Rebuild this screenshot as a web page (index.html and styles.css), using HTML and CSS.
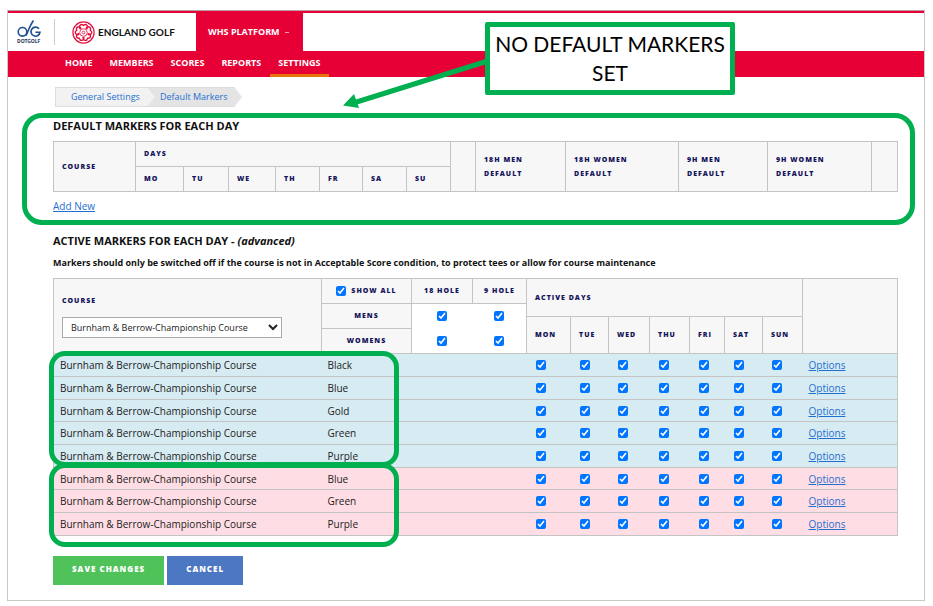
FILE: index.html
```html
<!DOCTYPE html>
<html lang="en">
<head>
<meta charset="utf-8">
<title>Default Markers</title>
<link rel="stylesheet" href="styles.css">
</head>
<body>
<div class="page">
  <header class="header">
    <a class="dotgolf" href="#" aria-label="DotGolf">
      <svg width="28" height="26" viewBox="0 0 28 26">
        <circle cx="6.500" cy="12.800" r="4.300" fill="none" stroke="#1d4f91" stroke-width="1.600"/>
        <path d="M10 16.500C12 13 14 6 17.500 1.500" stroke="#1d4f91" stroke-width="1.600" fill="none"/>
        <path d="M23 9.800A4.500 4.500 0 1 0 24 13.200H19.500" fill="none" stroke="#1d4f91" stroke-width="1.600"/>
        <text x="1" y="23.500" class="dotgolf-name">DOTGOLF</text>
      </svg>
    </a>
    <a class="brand" href="#">
      <svg width="23" height="23" viewBox="0 0 23 23" fill="none" stroke="#e4123f">
        <circle cx="11.500" cy="11.500" r="10.600" stroke-width="1.200"/>
        <path id="petal" stroke-width="1.300" d="M8.600 8.200C5.800 5.200 8.800 2.200 11.500 4.400 14.200 2.200 17.200 5.200 14.400 8.200"/>
        <use href="#petal" transform="rotate(72 11.500 11.500)"/>
        <use href="#petal" transform="rotate(144 11.500 11.500)"/>
        <use href="#petal" transform="rotate(216 11.500 11.500)"/>
        <use href="#petal" transform="rotate(288 11.500 11.500)"/>
        <circle cx="11.500" cy="11.500" r="3.800" stroke-width=".8"/>
        <circle cx="11.500" cy="11.500" r="1.400" stroke-width=".8"/>
      </svg>
      <span>ENGLAND GOLF</span>
    </a>
    <button class="platform" type="button">WHS PLATFORM <span class="caret"></span></button>
  </header>
  <nav class="nav">
    <a href="#">HOME</a>
    <a href="#">MEMBERS</a>
    <a href="#">SCORES</a>
    <a href="#">REPORTS</a>
    <a href="#" class="current">SETTINGS</a>
  </nav>

  <main class="content">
    <div class="crumbs">
      <a href="#" class="crumb">General Settings</a>
      <a href="#" class="crumb crumb-last">Default Markers</a>
    </div>

    <section class="defaults">
      <h2>DEFAULT MARKERS FOR EACH DAY</h2>
      <table class="grid default-grid">
        <colgroup>
          <col class="w82"><col class="w48"><col class="w45"><col class="w47"><col class="w44"><col class="w43"><col class="w44"><col class="w44"><col class="w25"><col class="w90"><col class="w113"><col class="w89"><col class="w104"><col class="w26">
        </colgroup>
        <thead>
          <tr>
            <th rowspan="2">COURSE</th><th colspan="7">DAYS</th><th rowspan="2"></th>
            <th rowspan="2">18H MEN<br>DEFAULT</th><th rowspan="2">18H WOMEN<br>DEFAULT</th>
            <th rowspan="2">9H MEN<br>DEFAULT</th><th rowspan="2">9H WOMEN<br>DEFAULT</th><th rowspan="2"></th>
          </tr>
          <tr><th>MO</th><th>TU</th><th>WE</th><th>TH</th><th>FR</th><th>SA</th><th>SU</th></tr>
        </thead>
      </table>
      <a href="#" class="link add">Add New</a>
      <span class="ring ring-defaults"></span>
    </section>

    <section class="active">
      <h2>ACTIVE MARKERS FOR EACH DAY - <em>(advanced)</em></h2>
      <p class="note">Markers should only be switched off if the course is not in Acceptable Score condition, to protect tees or allow for course maintenance</p>
      <div class="table-wrap">
        <table class="grid active-grid">
          <colgroup>
            <col class="w268"><col class="w90"><col class="w61"><col class="w54"><col class="w44"><col class="w38"><col class="w41"><col class="w40"><col class="w35"><col class="w38"><col class="w40"><col class="w95">
          </colgroup>
          <thead>
            <tr class="h25">
              <th rowspan="4" class="course-head">
                <label for="course">COURSE</label>
                <select id="course"><option>Burnham &amp; Berrow-Championship Course</option></select>
              </th>
              <th class="mid"><label class="show-all"><input type="checkbox" checked>SHOW ALL</label></th>
              <th class="mid">18 HOLE</th><th class="mid">9 HOLE</th>
              <th rowspan="2" colspan="7">ACTIVE DAYS</th><th rowspan="4"></th>
            </tr>
            <tr class="h13">
              <th rowspan="2" class="mid">MENS</th>
              <td rowspan="2" class="toggle toggle-first"><input type="checkbox" checked aria-label="Mens 18 hole"></td>
              <td rowspan="2" class="toggle"><input type="checkbox" checked aria-label="Mens 9 hole"></td>
            </tr>
            <tr class="h12">
              <th rowspan="2">MON</th><th rowspan="2">TUE</th><th rowspan="2">WED</th><th rowspan="2">THU</th><th rowspan="2">FRI</th><th rowspan="2">SAT</th><th rowspan="2">SUN</th>
            </tr>
            <tr class="h25">
              <th class="mid">WOMENS</th>
              <td class="toggle toggle-first"><input type="checkbox" checked aria-label="Womens 18 hole"></td>
              <td class="toggle"><input type="checkbox" checked aria-label="Womens 9 hole"></td>
            </tr>
          </thead>
          <tbody id="markers"></tbody>
        </table>
        <span class="ring ring-mens"></span>
        <span class="ring ring-womens"></span>
      </div>
    </section>

    <div class="actions">
      <button type="button" class="btn save">SAVE CHANGES</button>
      <button type="button" class="btn cancel">CANCEL</button>
    </div>
  </main>

  <svg class="arrow" width="150" height="60" viewBox="0 0 150 60">
    <path d="M12 46.500 148 4" stroke="#00b050" stroke-width="5"/>
    <path d="M0 49.500 11 38 16 52Z" fill="#00b050"/>
  </svg>
  <div class="callout">NO DEFAULT MARKERS SET</div>
</div>
<script src="script.js"></script>
</body>
</html>
```
FILE: styles.css
```css
* { box-sizing: border-box; }
body {
  margin: 0;
  padding: 10px 8px 5px 7px;
  background: #fff;
  color: #222;
  font: 10px/14px "Open Sans", sans-serif;
}
a { color: #1f6fd0; text-decoration: none; }
.page {
  position: relative;
  border: 1px solid #c8c8c8;
  border-top-color: #b9a0a6;
}
.header {
  display: flex;
  align-items: center;
  height: 40px;
  border-top: 2px solid #e60035;
}
.dotgolf {
  display: flex;
  padding: 0 10px 0 8px;
  border-right: 1px solid #ccc;
}
.dotgolf-name { font: 700 5px "Noto Sans", sans-serif; fill: #26365a; }
.brand {
  display: flex;
  align-items: center;
  gap: 3px;
  width: 141px;
  padding-left: 17px;
  color: #111;
  font: 700 10px/16px Lato, sans-serif;
  white-space: nowrap;
}
.platform {
  display: flex;
  align-items: center;
  align-self: stretch;
  gap: 5px;
  width: 107px;
  padding: 0 0 0 12px;
  border: 0;
  background: #e60035;
  color: #fff;
  font: 700 9px/14px "Open Sans", sans-serif;
  white-space: nowrap;
}
.caret { width: 4px; height: 1px; background: #f799ab; }
.nav {
  display: flex;
  gap: 1px;
  height: 26px;
  padding-left: 49px;
  background: #e60035;
}
.nav a {
  padding: 5px 8px 0;
  color: #fff;
  font: 700 9px/14px "Open Sans", sans-serif;
}
.nav .current { border-bottom: 3px solid #e8730c; }
.content { padding: 10px 26px 15px 45px; }

.crumbs { display: flex; margin-left: 2px; height: 20px; }
.crumb {
  width: 100px;
  padding-left: 15px;
  background: #f2f2f2;
  border: 1px solid #ddd;
  border-right: 0;
  font: 9px/18px "Open Sans", sans-serif;
  white-space: nowrap;
  clip-path: polygon(0 0, 92% 0, 100% 50%, 92% 100%, 0 100%);
}
.crumb-last {
  width: 95px;
  margin-left: -8px;
  padding-left: 12px;
  background: #e4e4e4;
  clip-path: polygon(0 0, 92% 0, 100% 50%, 92% 100%, 0 100%, 8% 50%);
}
h2 {
  margin: 0;
  color: #111;
  font-size: 11px;
  line-height: 14px;
  font-weight: 700;
}
.defaults { position: relative; padding-top: 12px; }
.grid {
  width: 100%;
  table-layout: fixed;
  border-collapse: collapse;
  border: 1px solid #c4c4c4;
}
.w25 { width: 25px; }
.w26 { width: 26px; }
.w35 { width: 35px; }
.w38 { width: 38px; }
.w40 { width: 40px; }
.w41 { width: 41px; }
.w43 { width: 43px; }
.w44 { width: 44px; }
.w45 { width: 45px; }
.w47 { width: 47px; }
.w48 { width: 48px; }
.w54 { width: 54px; }
.w61 { width: 61px; }
.w82 { width: 82px; }
.w89 { width: 89px; }
.w90 { width: 90px; }
.w95 { width: 95px; }
.w104 { width: 104px; }
.w113 { width: 113px; }
.w268 { width: 268px; }
.grid th {
  padding: 0 8px;
  border: 1px solid #c4c4c4;
  background: #f7f7f7;
  color: #14145a;
  font: 800 7px/14px "Open Sans", sans-serif;
  letter-spacing: 1px;
  text-align: left;
  white-space: nowrap;
}
.default-grid { margin-top: 8px; }
.default-grid tr { height: 25px; }
.link { text-decoration: underline; }
.add { display: inline-block; margin-top: 7px; }

.active { padding-top: 21px; }
.note {
  margin: 8px 0;
  color: #111;
  font: 700 9px/14px "Open Sans", sans-serif;
}
.table-wrap { position: relative; }
.h25 { height: 25px; }
.h13 { height: 13px; }
.h12 { height: 12px; }
.grid .mid { padding: 0; text-align: center; }
.show-all { display: flex; align-items: center; justify-content: center; gap: 5px; }
.course-head label { display: block; margin-bottom: 9px; }
.course-head select {
  display: block;
  width: 220px;
  height: 21px;
  padding: 0 0 0 4px;
  border: 1px solid #aaa;
  background: #fff;
  color: #222;
  font: 9px/18px "Open Sans", sans-serif;
}
.active-grid td { padding: 0; }
.active-grid .toggle { background: #fff; text-align: center; }
.active-grid .toggle-first { border-left: 1px solid #c4c4c4; }
input[type="checkbox"] {
  display: block;
  width: 10px;
  height: 10px;
  margin: 0;
  accent-color: #0075ff;
}
.toggle input { margin: 0 auto; }
tbody tr { height: 23px; }
tbody tr:nth-child(3n) { height: 22px; }
tbody td { border-top: 1px solid #c4c4c4; white-space: nowrap; }
.active-grid tbody td { padding-left: 6px; }
.active-grid tbody .day { padding-left: 9px; }
.mens { background: #d7ebf2; }
.womens { background: #ffdde4; }

.ring {
  position: absolute;
  border: 5px solid #00b050;
  border-radius: 16px;
  pointer-events: none;
}
.ring-defaults { top: 6px; right: -17px; bottom: -12px; left: -31px; border-radius: 20px; }
.ring-mens, .ring-womens { left: -4px; width: 350px; }
.ring-mens { top: 73px; height: 116px; }
.ring-womens { top: 185px; height: 84px; }

.actions { display: flex; gap: 3px; margin-top: 20px; }
.btn {
  height: 29px;
  padding: 0 19px 3px;
  border: 0;
  color: #fff;
  font: 800 8px/14px "Open Sans", sans-serif;
  letter-spacing: 1px;
}
.save { background: #4fc35a; }
.cancel { background: #4c77c2; }

.arrow { position: absolute; left: 335px; top: 45px; }
.callout {
  position: absolute;
  left: 477px;
  top: 11px;
  width: 250px;
  padding: 2px 0 3px;
  border: 5px solid #00b050;
  border-radius: 2px;
  background: #fff;
  color: #000;
  font: 21px/29px Lato, sans-serif;
  text-align: center;
}
```
FILE: script.js
```js
const days = ['Mon', 'Tue', 'Wed', 'Thu', 'Fri', 'Sat', 'Sun'];
const markers = [
  ['mens', 'Black'], ['mens', 'Blue'], ['mens', 'Gold'], ['mens', 'Green'], ['mens', 'Purple'],
  ['womens', 'Blue'], ['womens', 'Green'], ['womens', 'Purple'],
];
document.getElementById('markers').innerHTML = markers.map(([group, name]) => `
  <tr class="${group}">
    <td>Burnham &amp; Berrow-Championship Course</td><td colspan="3">${name}</td>
    ${days.map(d => `<td class="day"><input type="checkbox" checked aria-label="${name} ${d}"></td>`).join('')}
    <td><a href="#" class="link">Options</a></td>
  </tr>`).join('');
```
